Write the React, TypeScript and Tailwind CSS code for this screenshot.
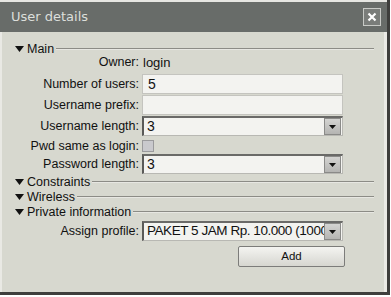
import React from "react";

const font = { fontFamily: '"Liberation Sans", Arial, sans-serif' };

function Caret() {
  return (
    <svg width="9" height="6" viewBox="0 0 9 6" className="shrink-0">
      <polygon points="0,0 9,0 4.5,6" fill="#111" />
    </svg>
  );
}

function Section({ title, className = "" }: { title: string; className?: string }) {
  return (
    <div className={`flex items-center h-[14px] pl-[13px] pr-[10px] ${className}`}>
      <Caret />
      <span className="ml-[3px] text-[12.5px] leading-none text-[#111]">{title}</span>
      <div className="flex-1 ml-[2px] h-[2px] border-t border-[#8c8c86] border-b-white/40 border-b" />
    </div>
  );
}

function Row({ label, children, className = "" }: { label: string; children: React.ReactNode; className?: string }) {
  return (
    <div className={`flex items-center ${className}`}>
      <div className="w-[140px] text-right pr-[3px] text-[12.5px] leading-none text-[#111]">{label}</div>
      {children}
    </div>
  );
}

function TextField({ value }: { value: string }) {
  return (
    <div className="w-[201px] h-[20px] bg-[#f3f3f0] border border-[#c4c4bf] flex items-center pl-[5px] text-[14px] text-[#111]">
      {value}
    </div>
  );
}

function SelectField({ value, narrow = false }: { value: string; narrow?: boolean }) {
  return (
    <div className="w-[201px] h-[20px] bg-[#f3f3f0] border border-[#b8b8b3] border-l-2 border-t-2 border-l-[#5a5a58] border-t-[#6a6a68] flex items-center relative overflow-hidden">
      <span
        className={`pl-[3px] text-[#111] whitespace-nowrap ${narrow ? "text-[13.5px] tracking-[-0.45px]" : "text-[14px]"}`}
      >
        {value}
      </span>
      <div className="absolute right-[1px] top-0 bottom-0 w-[17px] bg-gradient-to-b from-[#d4d4d2] to-[#b4b4b2] border border-[#8a8a88] flex items-center justify-center">
        <svg width="7" height="4" viewBox="0 0 7 4">
          <polygon points="0,0 7,0 3.5,4" fill="#111" />
        </svg>
      </div>
    </div>
  );
}

export default function App() {
  return (
    <div className="w-[391px] h-[297px] bg-white overflow-hidden" style={font}>
      <div className="w-[390px] h-[295px] flex flex-col border-r-[3px] border-b-[3px] border-[#3e3e3c]">
        <div className="h-[32px] bg-[#686c69] border-t-2 border-[#e6e6e2] flex items-center justify-between pl-[11px] pr-[6px]">
          <span className="text-[13px] text-[#dcdfdb]" style={{ fontFamily: '"DejaVu Sans", Verdana, sans-serif' }}>
            User details
          </span>
          <div className="w-[18px] h-[18px] border border-[#c8cac6] bg-[#7a7d7a] flex items-center justify-center">
            <svg width="10" height="10" viewBox="0 0 10 10">
              <path d="M1.5 1.5 L8.5 8.5 M8.5 1.5 L1.5 8.5" stroke="#fff" strokeWidth="2.2" />
            </svg>
          </div>
        </div>
        <div className="flex-1 bg-[#d7d8cf] border-l-2 border-l-[#e9e9e4] border-r-[3px] border-r-[#eaeae5] flex flex-col pt-[10px]">
          <Section title="Main" />
          <Row label="Owner:" className="h-[14px] mt-[-1px]">
            <span className="text-[13px] leading-none text-[#111] pl-[1px]">login</span>
          </Row>
          <Row label="Number of users:" className="mt-[5px]">
            <TextField value="5" />
          </Row>
          <Row label="Username prefix:" className="mt-[1px]">
            <TextField value="" />
          </Row>
          <Row label="Username length:" className="mt-[1px]">
            <SelectField value="3" />
          </Row>
          <Row label="Pwd same as login:" className="h-[16px] mt-[2px]">
            <div className="w-[12px] h-[12px] bg-[#c9c9cd] border border-[#9a9a9c]" />
          </Row>
          <Row label="Password length:" className="mt-[0px]">
            <SelectField value="3" />
          </Row>
          <Section title="Constraints" className="mt-[1px]" />
          <Section title="Wireless" className="mt-[1px]" />
          <Section title="Private information" className="mt-[1px]" />
          <Row label="Assign profile:" className="mt-[2px]">
            <SelectField value="PAKET 5 JAM Rp. 10.000 (1000" narrow />
          </Row>
          <div className="flex mt-[5px] pl-[236px]">
            <button className="w-[107px] h-[21px] rounded-[2px] border border-[#7c7c7a] bg-gradient-to-b from-[#f4f4f1] to-[#d6d6d0] text-[11.5px] text-[#111]">
              Add
            </button>
          </div>
        </div>
      </div>
    </div>
  );
}
